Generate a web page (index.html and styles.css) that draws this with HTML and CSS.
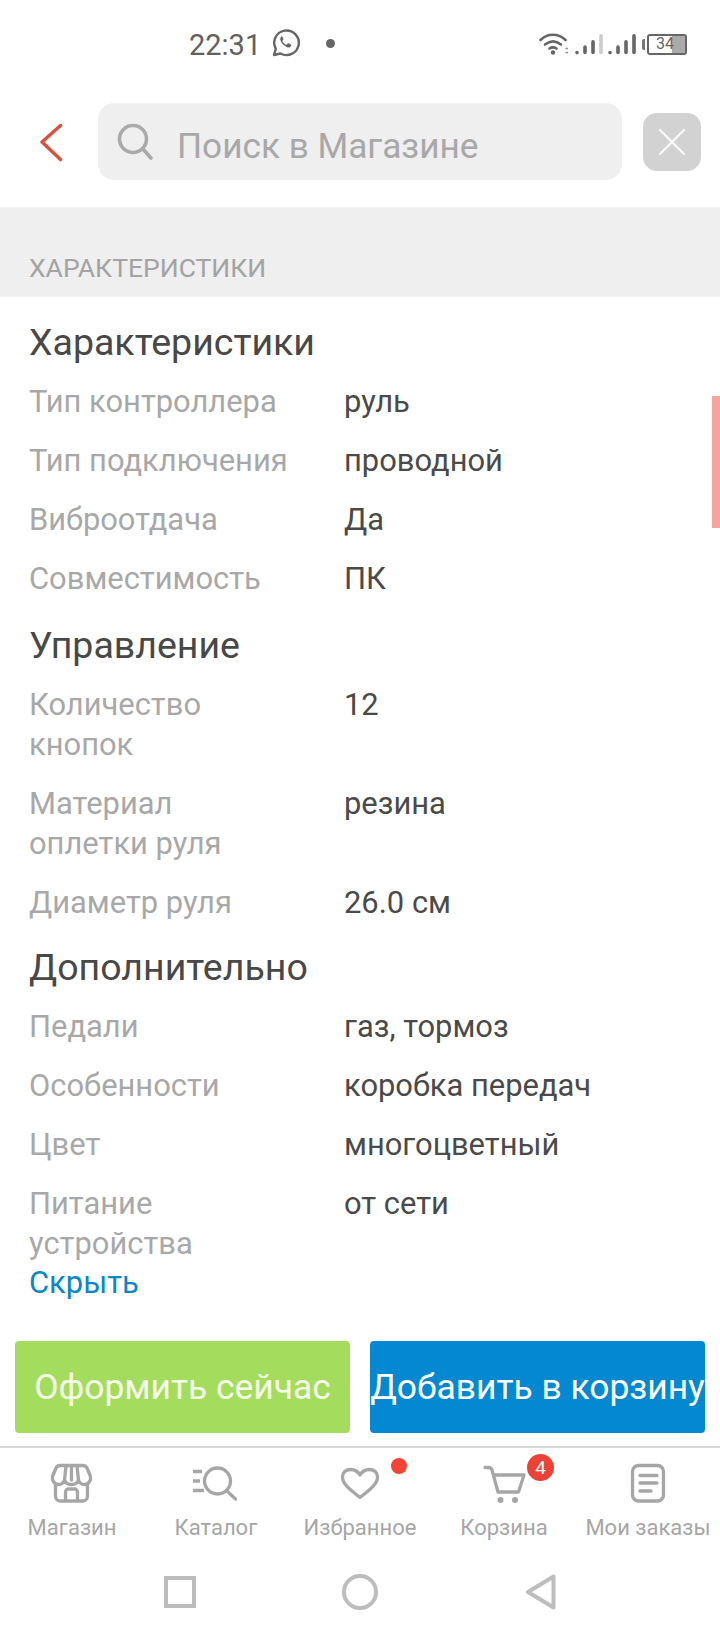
FILE: index.html
```html
<!DOCTYPE html>
<html lang="ru">
<head>
<meta charset="utf-8">
<title>Характеристики</title>
<link rel="stylesheet" href="styles.css">
</head>
<body>
<div class="phone">
  <div class="status">
    <div class="status-left">
      <span class="time">22:31</span>
      <svg class="wa" viewBox="0 0 30 30" width="30" height="30"><path d="M3 27l1.800-6.200A12.300 12.300 0 1 1 9.500 25.500z" fill="none" stroke="#666" stroke-width="2.400" stroke-linejoin="round"/><path d="M11 8.500c-1.400.6-2.200 2-1.600 3.800 1 3 3.700 5.800 6.800 7 1.900.6 3.300-.2 4-1.600.2-.5.100-1-.3-1.200l-2.300-1.200c-.5-.2-.8-.1-1.100.3l-.7.9c-.2.3-.5.300-.8.200-1.500-.7-2.800-1.900-3.600-3.500-.1-.3 0-.5.200-.8l.6-.7c.2-.3.300-.6.100-1l-1-2.300c-.3-.5-.7-.8-1.300-.5z" fill="#666"/></svg>
      <span class="dot"></span>
    </div>
    <div class="status-right">
      <svg class="wifi" viewBox="0 0 32 24" width="32" height="24"><g fill="none" stroke="#666" stroke-width="2.600" stroke-linecap="round"><path d="M1.500 8C8.500 1 19.500 1 26.500 8"/><path d="M6 12.500c5-4 11-4 16 0"/><path d="M10.500 16.500c2.300-1.500 4.700-1.500 7 0"/></g><circle cx="14" cy="20.500" r="2.200" fill="#666"/><path d="M26.500 16.500h2.400M26.500 20.500h2.400" stroke="#888" stroke-width="1.400"/></svg>
      <svg class="sig" viewBox="0 0 30 24" width="30" height="24"><g fill="none" stroke-width="3.600" stroke-linecap="round"><path d="M3 20.500v.1M11 15v5.500M19 9.800v10.700" stroke="#666"/><path d="M27 3.800v16.700" stroke="#ccc"/></g></svg>
      <svg class="sig" viewBox="0 0 30 24" width="30" height="24"><g fill="none" stroke="#666" stroke-width="3.600" stroke-linecap="round"><path d="M3 20.500v.1M11 15v5.500M19 9.800v10.700M27 3.800v16.700"/></g></svg>
      <div class="battery">
        <span class="battery-cap"></span>
        <div class="battery-body"><span class="battery-fill"></span><span class="battery-num">34</span></div>
      </div>
    </div>
  </div>

  <div class="searchbar">
    <svg class="back" viewBox="0 0 24 40" width="24" height="40"><path d="M20.500 1.500L2 18l18.500 17.500" fill="none" stroke="#d9503f" stroke-width="3.400" stroke-linecap="round" stroke-linejoin="round"/></svg>
    <div class="search">
      <svg viewBox="0 0 40 40" width="40" height="40"><circle cx="19" cy="17" r="13.500" fill="none" stroke="#aaa" stroke-width="3.600"/><path d="M29 27l8 9" stroke="#aaa" stroke-width="3.600" stroke-linecap="round"/></svg>
      <span class="search-text">Поиск в Магазине</span>
    </div>
    <div class="close"><svg viewBox="0 0 26 26" width="26" height="26"><path d="M1 1l24 24M25 1L1 25" stroke="#fff" stroke-width="2" stroke-linecap="round"/></svg></div>
  </div>

  <div class="band"><span>ХАРАКТЕРИСТИКИ</span></div>

  <main class="spec">
    <div class="scrollbar"></div>
    <h2>Характеристики</h2>
    <div class="row"><span class="k">Тип контроллера</span><span class="v">руль</span></div>
    <div class="row"><span class="k">Тип подключения</span><span class="v">проводной</span></div>
    <div class="row"><span class="k">Виброотдача</span><span class="v">Да</span></div>
    <div class="row"><span class="k">Совместимость</span><span class="v">ПК</span></div>
    <h2 class="h-wide">Управление</h2>
    <div class="row"><span class="k">Количество<br>кнопок</span><span class="v">12</span></div>
    <div class="row"><span class="k">Материал<br>оплетки руля</span><span class="v">резина</span></div>
    <div class="row"><span class="k">Диаметр руля</span><span class="v">26.0 см</span></div>
    <h2>Дополнительно</h2>
    <div class="row"><span class="k">Педали</span><span class="v">газ, тормоз</span></div>
    <div class="row"><span class="k">Особенности</span><span class="v">коробка передач</span></div>
    <div class="row"><span class="k">Цвет</span><span class="v">многоцветный</span></div>
    <div class="row"><span class="k">Питание<br>устройства</span><span class="v">от сети</span></div>
    <a class="hide">Скрыть</a>
  </main>

  <div class="actions">
    <div class="btn green">Оформить сейчас</div>
    <div class="btn blue">Добавить в корзину</div>
  </div>

  <nav class="tabs">
    <div class="tab">
      <svg viewBox="0 0 46 40" width="46" height="40"><g fill="none" stroke="#a6a6a6" stroke-width="3.300" stroke-linejoin="round" stroke-linecap="round"><path d="M11 2.500h23c2 0 3.200 1 4 2.500l3.500 8.500c.8 4-2 8-6 8-3 0-5-1.500-6-4.500-1 3-3.500 4.500-7 4.500s-6-1.500-7-4.500c-1 3-3 4.500-6 4.500-4 0-6.800-4-6-8L7 5c.8-1.500 2-2.500 4-2.500z"/><path d="M17 3l-1.500 14M28 3l1.500 14M22.500 3v14"/><path d="M6.500 22v11a5 5 0 0 0 5 5h22a5 5 0 0 0 5-5V22"/><path d="M16.500 37V29a3 3 0 0 1 3-3h6a3 3 0 0 1 3 3v8"/></g></svg>
      <span class="label">Магазин</span>
    </div>
    <div class="tab">
      <svg viewBox="0 0 46 40" width="46" height="40"><g fill="none" stroke="#a6a6a6" stroke-width="3.300" stroke-linecap="round"><circle cx="24.500" cy="18" r="13"/><path d="M34.500 28.500l8 7.500"/></g><path d="M0 8.500h9M0 18h7M0 27.500h11" stroke="#a6a6a6" stroke-width="3.300"/></svg>
      <span class="label">Каталог</span>
    </div>
    <div class="tab">
      <span class="pip"></span>
      <svg viewBox="0 0 46 40" width="46" height="40"><path d="M23 34.500C14 27.500 5.500 21.500 5.500 14 5.500 9.500 9 6.500 13.500 6.500c4 0 7.500 2 9.500 5.500 2-3.500 5.500-5.500 9.500-5.500 4.500 0 8 3 8 7.500 0 7.500-8.500 13.500-17.500 20.500z" fill="none" stroke="#a6a6a6" stroke-width="3.300" stroke-linejoin="round"/></svg>
      <span class="label">Избранное</span>
    </div>
    <div class="tab">
      <span class="count">4</span>
      <svg class="cart" viewBox="0 0 46 40" width="46" height="40"><g fill="none" stroke="#a6a6a6" stroke-width="3.300" stroke-linecap="round" stroke-linejoin="round"><path d="M2 4.500h3.500c1.700 0 3 1 3.500 2.500L15 29h20.500l5.500-17H10.500"/></g><circle cx="17.500" cy="37" r="3" fill="#a6a6a6"/><circle cx="32" cy="37" r="3" fill="#a6a6a6"/></svg>
      <span class="label">Корзина</span>
    </div>
    <div class="tab">
      <svg viewBox="0 0 46 40" width="46" height="40"><rect x="7.500" y="2.500" width="31" height="35.500" rx="6" fill="none" stroke="#a6a6a6" stroke-width="3.300"/><path d="M15 12.500h17M15 20h17M15 28h11" stroke="#a6a6a6" stroke-width="3.300" stroke-linecap="round"/></svg>
      <span class="label">Мои заказы</span>
    </div>
  </nav>

  <div class="sysnav">
    <span class="sys-square"></span>
    <span class="sys-circle"></span>
    <svg class="sys-back" viewBox="0 0 32 36" width="32" height="36"><path d="M29.500 2.500v31L4 18z" fill="none" stroke="#bdbdbd" stroke-width="4" stroke-linejoin="round"/></svg>
  </div>
</div>
</body>
</html>
```
FILE: styles.css
```css
* { box-sizing: border-box; }
html, body { margin: 0; padding: 0; background: #fff; }
body { font-family: Roboto, "Noto Sans", sans-serif; }
.phone { width: 720px; height: 1640px; display: flex; flex-direction: column; overflow: hidden; background: #fff; }

.status { height: 88px; flex: none; display: flex; justify-content: space-between; align-items: center; padding: 2px 33px 0 189px; }
.status-left { display: flex; align-items: center; }
.time { font-size: 29px; color: #616161; }
.wa { margin-left: 10px; margin-top: -4px; }
.dot { width: 9px; height: 9px; border-radius: 50%; background: #666; margin-left: 25px; margin-top: -4px; }
.status-right { display: flex; align-items: center; margin-top: -2px; }
.sig { margin-left: 3px; }
.battery { display: flex; align-items: center; margin-left: 5px; }
.battery-cap { width: 3px; height: 11px; background: #777; border-radius: 2px 0 0 2px; margin-right: 2px; }
.battery-body { width: 40px; height: 21px; border: 2px solid #666; border-radius: 3px; position: relative; display: flex; align-items: center; justify-content: center; overflow: hidden; }
.battery-fill { position: absolute; right: 0; top: 0; bottom: 0; width: 13px; background: #aaa; }
.battery-num { position: relative; font-size: 16px; color: #666; line-height: 1; margin-right: 4px; }

.searchbar { height: 119px; flex: none; display: flex; align-items: flex-start; padding: 15px 19px 0 40px; }
.back { margin-top: 21px; flex: none; }
.search { margin-left: 34px; width: 524px; height: 77px; background: #efefef; border-radius: 16px; display: flex; align-items: center; padding-left: 16px; }
.search-text { font-size: 35.200px; color: #a8a8a8; margin-left: 23px; margin-top: 9px; }
.close { margin-left: 21px; margin-top: 10px; width: 58px; height: 58px; background: #d2d2d2; border-radius: 14px; display: flex; align-items: center; justify-content: center; }

.band { height: 90px; flex: none; background: #efefef; display: flex; align-items: flex-end; padding: 0 0 14px 29px; font-size: 26.500px; color: #a3a3a3; line-height: 30px; }

.spec { position: relative; flex: none; height: 1044px; padding: 11px 29px 0; }
.scrollbar { position: absolute; right: 0; top: 99px; width: 8px; height: 132px; background: #f5a69c; }
.spec h2 { margin: 0; font-weight: 400; font-size: 37.500px; line-height: 40px; color: #484848; padding: 14px 0 11px; }
.spec .h-wide { padding-top: 16px; }
.row { display: flex; font-size: 30.900px; line-height: 40px; padding: 9px 0 10px; }
.k { width: 315px; flex: none; color: #a8a8a8; }
.v { color: #4a4a4a; }
.hide { display: block; font-size: 30.900px; line-height: 40px; color: #0a87c8; margin-top: -11px; }

.actions { flex: none; display: flex; padding: 0 15px; justify-content: space-between; height: 92px; }
.btn { width: 335px; height: 92px; border-radius: 4px; display: flex; align-items: center; justify-content: center; font-size: 35.400px; color: #fff; white-space: nowrap; }
.green { background: #a4dc5e; color: #f6fde9; }
.blue { background: #0488d1; }

.tabs { flex: none; margin-top: 13px; border-top: 2px solid #d6d6d6; height: 117px; display: flex; }
.tab { flex: 1 1 0; position: relative; display: flex; flex-direction: column; align-items: center; padding-top: 15px; font-size: 22px; color: #a6a6a6; gap: 10px; white-space: nowrap; }
.cart { margin-left: 3px; }
.label { line-height: 30px; }
.pip { position: absolute; top: 10px; left: 103px; width: 16px; height: 16px; border-radius: 50%; background: #f44336; }
.count { position: absolute; top: 6px; left: 95px; width: 27px; height: 27px; border-radius: 50%; background: #ea4335; color: #fff; font-size: 19px; line-height: 27px; text-align: center; z-index: 1; }

.sysnav { flex: none; height: 77px; position: relative; }
.sys-square { width: 32px; height: 32px; border: 4px solid #bdbdbd; position: absolute; left: 164px; top: 13px; }
.sys-circle { width: 36px; height: 36px; border: 4px solid #bdbdbd; border-radius: 50%; position: absolute; left: 342px; top: 11px; }
.sys-back { position: absolute; left: 524px; top: 11px; }
```
